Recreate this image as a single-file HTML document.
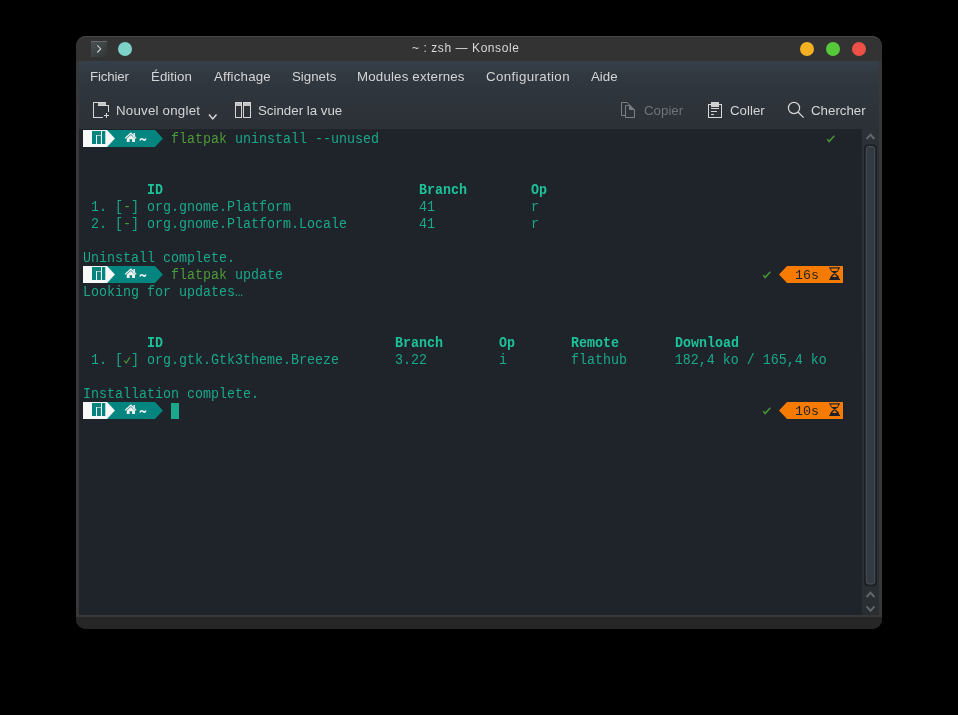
<!DOCTYPE html>
<html><head><meta charset="utf-8">
<style>
*{margin:0;padding:0;box-sizing:border-box}
html,body{width:958px;height:715px;background:#000000;overflow:hidden}
body{position:relative;font-family:"Liberation Sans",sans-serif;-webkit-font-smoothing:antialiased}
.a{position:absolute}
.mi,.tb,.ttl,.row{will-change:transform}
svg{position:absolute;overflow:visible}
.mi,.tb{color:#d3d4d5;font-size:13.3px;line-height:16px;white-space:nowrap}
.row{position:absolute;left:83px;height:17px;font-family:"Liberation Mono",monospace;font-size:13.33px;line-height:17px;white-space:pre;color:#1aa88a;transform:translateY(1px) scaleY(1.06);transform-origin:0 12px}
.g{color:#4e9a3a}
.b{font-weight:bold;color:#1dc29a}
</style></head><body>
<div class="a" style="left:76px;top:36px;width:806px;height:593px;border-radius:10px;background:#383838"></div>
<div class="a" style="left:76px;top:36px;width:806px;height:25px;background:#333333;border-top:1px solid #474747;border-radius:10px 10px 0 0"></div>
<div class="a" style="left:76px;top:617px;width:806px;height:12px;background:#262626;border-radius:0 0 10px 10px"></div>
<div class="a ttl" style="left:412px;top:41px;color:#d8d8d8;font-size:12px;line-height:15px;letter-spacing:0.57px;white-space:nowrap">~ : zsh — Konsole</div>
<div class="a" style="left:91px;top:41px;width:16px;height:16px;background:linear-gradient(135deg,#4a5252,#2f3535);border-top:1px solid #646a6a"></div>
<svg style="left:91px;top:41px" width="16" height="16"><path d="M6.3 4.3 L9.7 7.9 L6.3 11.5" fill="none" stroke="#cdd1d1" stroke-width="1.1"/></svg>
<div class="a" style="left:118px;top:42px;width:14px;height:14px;border-radius:50%;background:#7dd3c8"></div>
<div class="a" style="left:800px;top:42px;width:14px;height:14px;border-radius:50%;background:#f4b121"></div>
<div class="a" style="left:826px;top:42px;width:14px;height:14px;border-radius:50%;background:#56c93a"></div>
<div class="a" style="left:852px;top:42px;width:14px;height:14px;border-radius:50%;background:#ed5047"></div>
<div class="a" style="left:79px;top:61px;width:800px;height:68px;background:linear-gradient(#36404a 0px,#31383f 14px,#2f353c 30px,#2c3137 68px)"></div>
<div class="a mi" style="left:90px;top:69px;letter-spacing:-0.15px">Fichier</div>
<div class="a mi" style="left:151px;top:69px;letter-spacing:0.05px">Édition</div>
<div class="a mi" style="left:214px;top:69px;letter-spacing:0.19px">Affichage</div>
<div class="a mi" style="left:292px;top:69px;letter-spacing:0px">Signets</div>
<div class="a mi" style="left:357px;top:69px;letter-spacing:0.17px">Modules externes</div>
<div class="a mi" style="left:486px;top:69px;letter-spacing:0.37px">Configuration</div>
<div class="a mi" style="left:591px;top:69px;letter-spacing:0px">Aide</div>
<div class="a tb" style="left:116px;top:103px;letter-spacing:0.22px">Nouvel onglet</div>
<div class="a tb" style="left:258px;top:103px;letter-spacing:0px">Scinder la vue</div>
<div class="a tb" style="left:644px;top:103px;letter-spacing:0px;color:#6e7378">Copier</div>
<div class="a tb" style="left:730px;top:103px;letter-spacing:0px">Coller</div>
<div class="a tb" style="left:811px;top:103px;letter-spacing:0px">Chercher</div>
<svg style="left:93px;top:102px" width="16" height="16" shape-rendering="crispEdges">
<rect x="0" y="0" width="1" height="16" fill="#d6d6d6"/><rect x="0" y="0" width="13" height="1" fill="#d6d6d6"/>
<rect x="5" y="1" width="8" height="3" fill="#c4c4c4"/><rect x="5" y="3" width="11" height="1" fill="#d6d6d6"/>
<rect x="15" y="3" width="1" height="7" fill="#d6d6d6"/><rect x="0" y="15" width="10" height="1" fill="#d6d6d6"/>
<rect x="11" y="13" width="5" height="1" fill="#d6d6d6"/><rect x="13" y="11" width="1" height="5" fill="#d6d6d6"/></svg>
<svg style="left:208px;top:113px" width="10" height="8"><path d="M1 1.6 L4.75 5.9 L8.5 1.6" fill="none" stroke="#d6d6d6" stroke-width="1.55"/></svg>
<svg style="left:235px;top:102px" width="16" height="16" shape-rendering="crispEdges">
<rect x="0.5" y="0.5" width="6" height="15" fill="none" stroke="#d6d6d6"/><rect x="1" y="1" width="5" height="3" fill="#c4c4c4"/>
<rect x="8.5" y="0.5" width="7" height="15" fill="none" stroke="#d6d6d6"/><rect x="9" y="1" width="6" height="3" fill="#c4c4c4"/></svg>
<svg style="left:621px;top:102px" width="15" height="16">
<path d="M4.5 13.5 H0.5 V0.5 H6.3 L13.5 8 V15.5 H4.5 V3.5 H8.5 V7.5 H13.5" fill="none" stroke="#7b7f84" stroke-width="1"/>
<path d="M6.3 0.5 L13.5 8 H9 V3.5 Z" fill="#7b7f84"/></svg>
<svg style="left:708px;top:102px" width="14" height="16" shape-rendering="crispEdges">
<path d="M3 2.5 H0.5 V15.5 H13.5 V2.5 H11" fill="none" stroke="#d6d6d6" stroke-width="1"/>
<rect x="3" y="0" width="8" height="5" fill="#cfcfcf"/>
<rect x="3" y="6" width="8" height="1" fill="#d6d6d6"/><rect x="3" y="9" width="6" height="1" fill="#d6d6d6"/><rect x="3" y="12" width="3" height="1" fill="#d6d6d6"/></svg>
<svg style="left:786px;top:100px" width="20" height="20">
<circle cx="8" cy="8" r="5.6" fill="none" stroke="#d6d6d6" stroke-width="1.2"/>
<path d="M12 12 L17.6 17.6" stroke="#d6d6d6" stroke-width="1.3"/></svg>
<div class="a" style="left:79px;top:129px;width:783px;height:486px;background:#1f232a"></div>
<div class="a" style="left:862px;top:129px;width:17px;height:486px;background:linear-gradient(#2c3137,#292e33)"></div>
<svg style="left:862px;top:129px" width="17" height="486"><path d="M4.6 10 L8.5 5.6 L12.4 10" fill="none" stroke="#62686e" stroke-width="1.9"/><rect x="1.5" y="15" width="14" height="443" rx="4.5" fill="#1c2024"/><rect x="1.5" y="15" width="14" height="443" rx="4.5" fill="none" stroke="#33393f" stroke-width="0.6"/><rect x="4.3" y="17.5" width="8.4" height="437.5" rx="2.5" fill="#343a41" stroke="#4a5158" stroke-width="1"/><path d="M4.6 468 L8.5 463.6 L12.4 468" fill="none" stroke="#62686e" stroke-width="1.9"/><path d="M4.6 477.4 L8.5 481.8 L12.4 477.4" fill="none" stroke="#62686e" stroke-width="1.9"/></svg>
<div class="row" style="top:130px">           <span class="g">flatpak</span> uninstall --unused</div>
<div class="row" style="top:181px">        <span class="b">ID</span>                                <span class="b">Branch</span>        <span class="b">Op</span></div>
<div class="row" style="top:198px"> 1. [<span class="g">-</span>] org.gnome.Platform                41            r</div>
<div class="row" style="top:215px"> 2. [<span class="g">-</span>] org.gnome.Platform.Locale         41            r</div>
<div class="row" style="top:249px">Uninstall complete.</div>
<div class="row" style="top:266px">           <span class="g">flatpak</span> update</div>
<div class="row" style="top:283px">Looking for updates…</div>
<div class="row" style="top:334px">        <span class="b">ID</span>                             <span class="b">Branch</span>       <span class="b">Op</span>       <span class="b">Remote</span>       <span class="b">Download</span></div>
<div class="row" style="top:351px"> 1. [ ] org.gtk.Gtk3theme.Breeze       3.22         i        flathub      182,4 ko / 165,4 ko</div>
<div class="row" style="top:385px">Installation complete.</div>
<svg style="left:83px;top:130px" width="81" height="17"><rect x="0" y="0" width="24" height="17" fill="#f8f8f8"/><path d="M24 0 H72 L80 8.5 L72 17 H24 Z" fill="#04857f"/><path d="M24 0 L32 8.5 L24 17 Z" fill="#f8f8f8"/><g fill="#04857f"><rect x="9" y="1" width="9" height="4"/><rect x="9" y="1" width="4" height="13"/><rect x="14" y="5.6" width="3.9" height="8.4"/><rect x="19" y="1" width="3.3" height="13"/></g><path d="M42.2 8.2 L47.9 3.2 L53.1 8.2" fill="none" stroke="#f0f0f0" stroke-width="1.3"/><rect x="50.4" y="3" width="1.5" height="3.6" fill="#f0f0f0"/><path d="M43.7 8.6 L47.85 5 L52 8.6 V12.1 H49.1 V9.3 H46.6 V12.1 H43.7 Z" fill="#f0f0f0"/><path d="M57 10.6 C57.7 8.4 59 8.3 60 9.4 C60.9 10.4 62.2 10.6 62.9 8.4" fill="none" stroke="#f0f0f0" stroke-width="1.6"/></svg>
<svg style="left:83px;top:266px" width="81" height="17"><rect x="0" y="0" width="24" height="17" fill="#f8f8f8"/><path d="M24 0 H72 L80 8.5 L72 17 H24 Z" fill="#04857f"/><path d="M24 0 L32 8.5 L24 17 Z" fill="#f8f8f8"/><g fill="#04857f"><rect x="9" y="1" width="9" height="4"/><rect x="9" y="1" width="4" height="13"/><rect x="14" y="5.6" width="3.9" height="8.4"/><rect x="19" y="1" width="3.3" height="13"/></g><path d="M42.2 8.2 L47.9 3.2 L53.1 8.2" fill="none" stroke="#f0f0f0" stroke-width="1.3"/><rect x="50.4" y="3" width="1.5" height="3.6" fill="#f0f0f0"/><path d="M43.7 8.6 L47.85 5 L52 8.6 V12.1 H49.1 V9.3 H46.6 V12.1 H43.7 Z" fill="#f0f0f0"/><path d="M57 10.6 C57.7 8.4 59 8.3 60 9.4 C60.9 10.4 62.2 10.6 62.9 8.4" fill="none" stroke="#f0f0f0" stroke-width="1.6"/></svg>
<svg style="left:83px;top:402px" width="81" height="17"><rect x="0" y="0" width="24" height="17" fill="#f8f8f8"/><path d="M24 0 H72 L80 8.5 L72 17 H24 Z" fill="#04857f"/><path d="M24 0 L32 8.5 L24 17 Z" fill="#f8f8f8"/><g fill="#04857f"><rect x="9" y="1" width="9" height="4"/><rect x="9" y="1" width="4" height="13"/><rect x="14" y="5.6" width="3.9" height="8.4"/><rect x="19" y="1" width="3.3" height="13"/></g><path d="M42.2 8.2 L47.9 3.2 L53.1 8.2" fill="none" stroke="#f0f0f0" stroke-width="1.3"/><rect x="50.4" y="3" width="1.5" height="3.6" fill="#f0f0f0"/><path d="M43.7 8.6 L47.85 5 L52 8.6 V12.1 H49.1 V9.3 H46.6 V12.1 H43.7 Z" fill="#f0f0f0"/><path d="M57 10.6 C57.7 8.4 59 8.3 60 9.4 C60.9 10.4 62.2 10.6 62.9 8.4" fill="none" stroke="#f0f0f0" stroke-width="1.6"/></svg>
<svg style="left:827px;top:135px" width="8" height="8"><path d="M0.7 4.6 L2.1 6.6 L6.9 1.2" fill="none" stroke="#489838" stroke-width="1.55" stroke-linecap="round"/></svg>
<svg style="left:763px;top:271px" width="8" height="8"><path d="M0.7 4.6 L2.1 6.6 L6.9 1.2" fill="none" stroke="#489838" stroke-width="1.55" stroke-linecap="round"/></svg>
<svg style="left:779px;top:266px" width="64" height="17"><path d="M0 8.5 L8 0 H64 V17 H8 Z" fill="#f77b00"/><path d="M50.2 1.2 H61 V2.4 H60.2 C60 5 57.5 6.6 55.6 7.3 C57.5 8 60 10 60.5 12.9 H61 V14 H50.2 V12.9 H50.8 C51.3 10 53.7 8 55.6 7.3 C53.7 6.6 51.2 5 51 2.4 H50.2 Z" fill="#1e2228"/><path d="M52 2.4 H59.2 C59 4 58.3 4.7 57.8 5.0 H53.4 C52.9 4.7 52.2 4 52 2.4 Z" fill="#f77b00"/><path d="M55.6 8.2 L57.9 10.9 H53.3 Z" fill="#f77b00"/></svg>
<div class="row" style="top:267px;left:795px;color:#1e2228;transform:none">16s</div>
<svg style="left:763px;top:407px" width="8" height="8"><path d="M0.7 4.6 L2.1 6.6 L6.9 1.2" fill="none" stroke="#489838" stroke-width="1.55" stroke-linecap="round"/></svg>
<svg style="left:779px;top:402px" width="64" height="17"><path d="M0 8.5 L8 0 H64 V17 H8 Z" fill="#f77b00"/><path d="M50.2 1.2 H61 V2.4 H60.2 C60 5 57.5 6.6 55.6 7.3 C57.5 8 60 10 60.5 12.9 H61 V14 H50.2 V12.9 H50.8 C51.3 10 53.7 8 55.6 7.3 C53.7 6.6 51.2 5 51 2.4 H50.2 Z" fill="#1e2228"/><path d="M52 2.4 H59.2 C59 4 58.3 4.7 57.8 5.0 H53.4 C52.9 4.7 52.2 4 52 2.4 Z" fill="#f77b00"/><path d="M55.6 8.2 L57.9 10.9 H53.3 Z" fill="#f77b00"/></svg>
<div class="row" style="top:403px;left:795px;color:#1e2228;transform:none">10s</div>
<svg style="left:123px;top:356px" width="8" height="9"><path d="M1.2 4.6 L3.2 7 L7 1.2" fill="none" stroke="#4a963a" stroke-width="1.2"/></svg>
<div class="a" style="left:171px;top:403px;width:8px;height:16px;background:#1aa88a"></div>
</body></html>
